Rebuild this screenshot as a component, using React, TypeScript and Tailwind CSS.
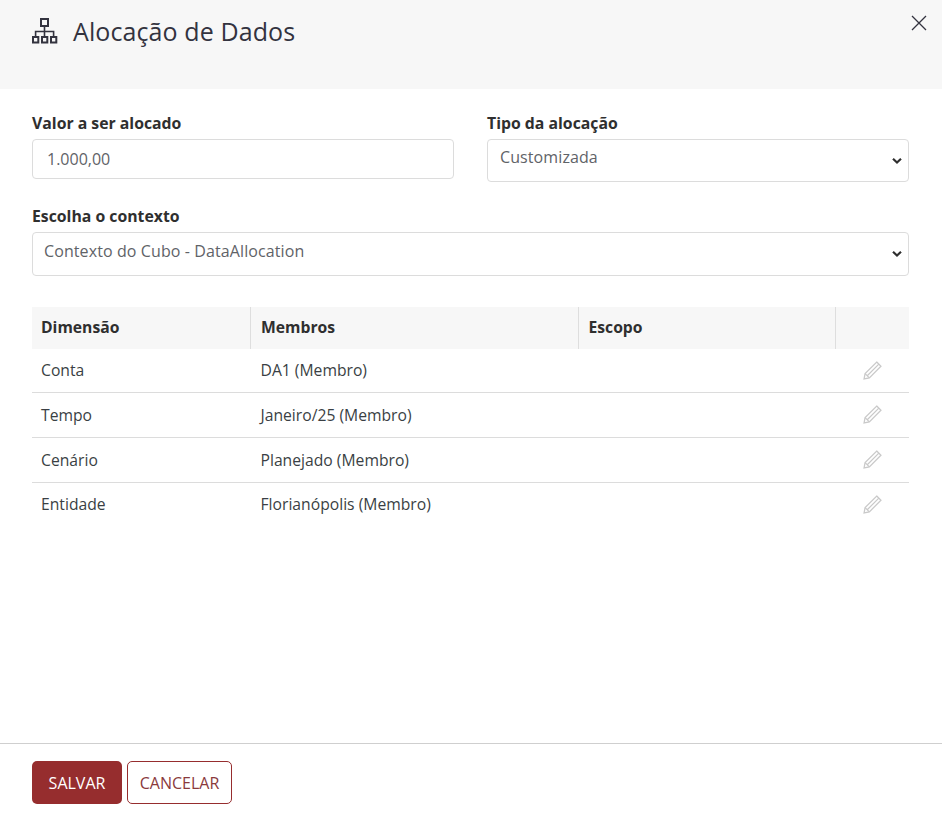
import React from "react";

const rows = [
  ["Conta", "DA1 (Membro)", "h-[43px]"],
  ["Tempo", "Janeiro/25 (Membro)", "h-[45px]"],
  ["Cenário", "Planejado (Membro)", "h-[45px]"],
  ["Entidade", "Florianópolis (Membro)", "h-[44px]"],
];

function Pencil() {
  return (
    <svg width="19" height="19" viewBox="0 0 18 18" fill="none" stroke="#c9c9c9" strokeWidth="1.2" className="block">
      <path d="M13 1 L17 5 L6 16 L1 17 L2 12 Z" />
      <path d="M3.8 14.2 L15 3 M2 12 L6 16" />
    </svg>
  );
}

function Sitemap() {
  return (
    <svg width="26" height="26" viewBox="0 0 26 26" fill="none" stroke="#33333f" strokeWidth="2" className="block">
      <rect x="9" y="1" width="7" height="7" />
      <rect x="1" y="19" width="5.3" height="5.5" />
      <rect x="10" y="19" width="5.3" height="5.5" />
      <rect x="19" y="19" width="5.3" height="5.5" />
      <path strokeWidth="1.6" d="M12.5 8 V19 M3.6 19 V13.5 H21.6 V19" />
    </svg>
  );
}

function Select({ value, height, pad }: { value: string; height: string; pad: string }) {
  return (
    <div className={`relative mt-[6px] ${height}`}>
      <select className={`h-full w-full appearance-none rounded-[4px] border border-[#dcdcdc] bg-white pb-[7px] ${pad} text-[16px] tracking-[0.1px] text-[#5f6368] outline-none`}>
        <option>{value}</option>
      </select>
      <svg width="10" height="7" viewBox="0 0 10 7" fill="none" stroke="#2f2f2f" strokeWidth="2.2" className="pointer-events-none absolute right-[7px] top-1/2 -translate-y-1/2">
        <path d="M1 1.2 L5 5 L9 1.2" />
      </svg>
    </div>
  );
}

export default function App() {
  return (
    <div className="flex h-[822px] w-[942px] flex-col bg-white font-['Open_Sans',sans-serif] text-[#3a3f44]">
      <header className="relative flex h-[89px] shrink-0 items-start gap-[15px] bg-[#f7f7f7] pl-[32px] pt-[18px]">
        <Sitemap />
        <h1 className="-mt-px text-[25px] leading-[28px] tracking-[0.1px] text-[#33333f]">Alocação de Dados</h1>
        <button className="absolute right-[15px] top-[15px]" aria-label="Fechar">
          <svg width="16" height="16" viewBox="0 0 16 16" stroke="#33333f" strokeWidth="1.3" className="block">
            <path d="M1 1 L15 15 M15 1 L1 15" />
          </svg>
        </button>
      </header>

      <main className="flex flex-1 flex-col pb-[33px] pl-[32px] pr-[33px] pt-[24px]">
        <div className="flex gap-[33px]">
          <label className="flex w-[422px] flex-col">
            <span className="text-[15.8px] font-bold leading-[20px] text-[#2f2f2f]">Valor a ser alocado</span>
            <input
              readOnly
              value="1.000,00"
              className="mt-[6px] h-[40px] rounded-[4px] border border-[#dcdcdc] px-[14px] text-[16px] text-[#5f6368] outline-none"
            />
          </label>
          <label className="flex w-[422px] flex-col">
            <span className="text-[15.8px] font-bold leading-[20px] text-[#2f2f2f]">Tipo da alocação</span>
            <Select value="Customizada" height="h-[43px]" pad="pl-[12px]" />
          </label>
        </div>

        <label className="mt-[24px] flex flex-col">
          <span className="text-[15.8px] font-bold leading-[20px] text-[#2f2f2f]">Escolha o contexto</span>
          <Select value="Contexto do Cubo - DataAllocation" height="h-[44px]" pad="pl-[11px]" />
        </label>

        <table className="mt-[31px] w-full table-fixed border-collapse text-[15.7px]">
          <colgroup>
            <col className="w-[218px]" />
            <col className="w-[328px]" />
            <col className="w-[257px]" />
            <col />
          </colgroup>
          <thead>
            <tr className="h-[42px] bg-[#f7f7f7] text-left text-[#2f2f2f]">
              <th className="border-r border-[#dedede] pl-[9px] font-bold">Dimensão</th>
              <th className="border-r border-[#dedede] pl-[10.5px] font-bold">Membros</th>
              <th className="border-r border-[#dedede] pl-[10px] font-bold">Escopo</th>
              <th />
            </tr>
          </thead>
          <tbody>
            {rows.map(([a, b, h], i) => (
              <tr key={a} className={`${h} ${i < 3 ? "border-b border-[#dcdcdc]" : ""}`}>
                <td className="pl-[9px] pt-[2px]">{a}</td>
                <td className="pl-[10.5px] pt-[2px]">{b}</td>
                <td />
                <td>
                  <div className="flex justify-center pl-[1px]">
                    <Pencil />
                  </div>
                </td>
              </tr>
            ))}
          </tbody>
        </table>
      </main>

      <footer className="flex h-[79px] shrink-0 gap-[5px] border-t border-[#cfcfcf] px-[32px] pt-[17px]">
        <button className="h-[43px] w-[90px] rounded-[5px] bg-[#962d2e] text-[16px] text-white">SALVAR</button>
        <button className="h-[43px] w-[105px] rounded-[5px] border border-[#962d2e] bg-white text-[16px] text-[#8a3a3c]">CANCELAR</button>
      </footer>
    </div>
  );
}
